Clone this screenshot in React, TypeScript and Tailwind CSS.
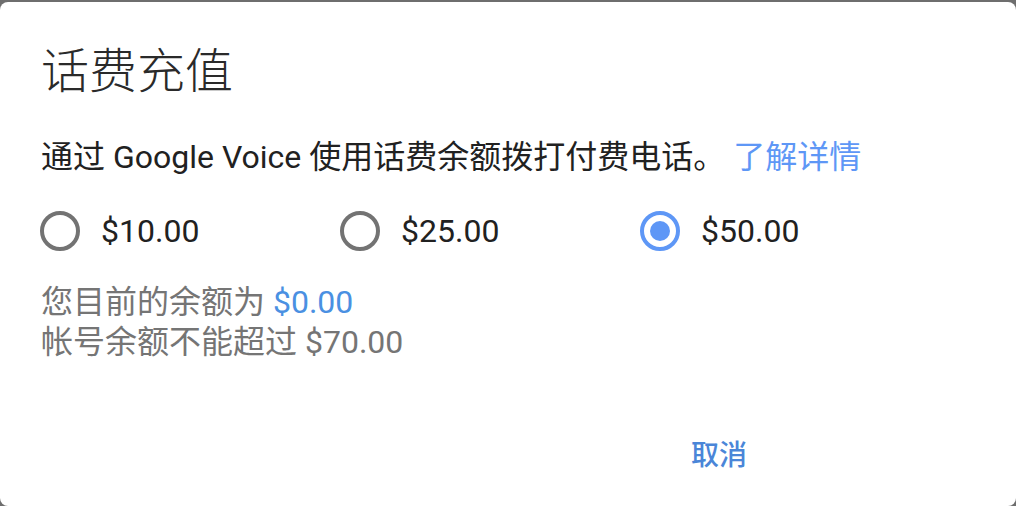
import { useState } from "react";

const amounts = ["$10.00", "$25.00", "$50.00"];

const Radio = ({ checked }: { checked: boolean }) => (
  <span
    className={`flex items-center justify-center w-[40px] h-[40px] rounded-full border-[4px] ${
      checked ? "border-[#5e97f6]" : "border-[#737373]"
    }`}
  >
    {checked && <span className="block w-[20px] h-[20px] rounded-full bg-[#5e97f6]" />}
  </span>
);

const App = () => {
  const [selected, setSelected] = useState(2);

  return (
    <div
      className="w-[1016px] h-[506px] bg-[#6e6e6e] overflow-hidden"
      style={{ fontFamily: "Roboto, 'Noto Sans CJK SC', sans-serif" }}
    >
      <div className="mt-[2px] h-[504px] bg-white rounded-[8px] pl-[40px] flex flex-col">
        <h1 className="mt-[42px] pl-[1px] text-[48px] leading-[56px] text-[#2a2a2a] font-light">话费充值</h1>

        <p className="mt-[37px] pl-[1px] text-[32px] leading-[40px] text-[#212121]">
          通过 Google Voice 使用话费余额拨打付费电话。{" "}
          <a className="text-[#5e97f6]" href="#">了解详情</a>
        </p>

        <div className="mt-[34px] grid grid-cols-[300px_300px_300px]">
          {amounts.map((a, i) => (
            <button
              key={a}
              type="button"
              onClick={() => setSelected(i)}
              className="flex items-center gap-[21px] h-[40px] text-left"
            >
              <Radio checked={selected === i} />
              <span className="text-[32px] leading-[40px] text-[#212121]">{a}</span>
            </button>
          ))}
        </div>

        <div className="mt-[31px] pl-[1px] text-[32px] leading-[40px] text-[#757575]">
          <div>
            您目前的余额为 <span className="text-[#4a90e2]">$0.00</span>
          </div>
          <div>帐号余额不能超过 $70.00</div>
        </div>

        <div className="mt-[74px] flex justify-end pr-[269px]">
          <button type="button" className="text-[28px] leading-[40px] font-medium text-[#4a86d8]">
            取消
          </button>
        </div>
      </div>
    </div>
  );
};

export default App;
